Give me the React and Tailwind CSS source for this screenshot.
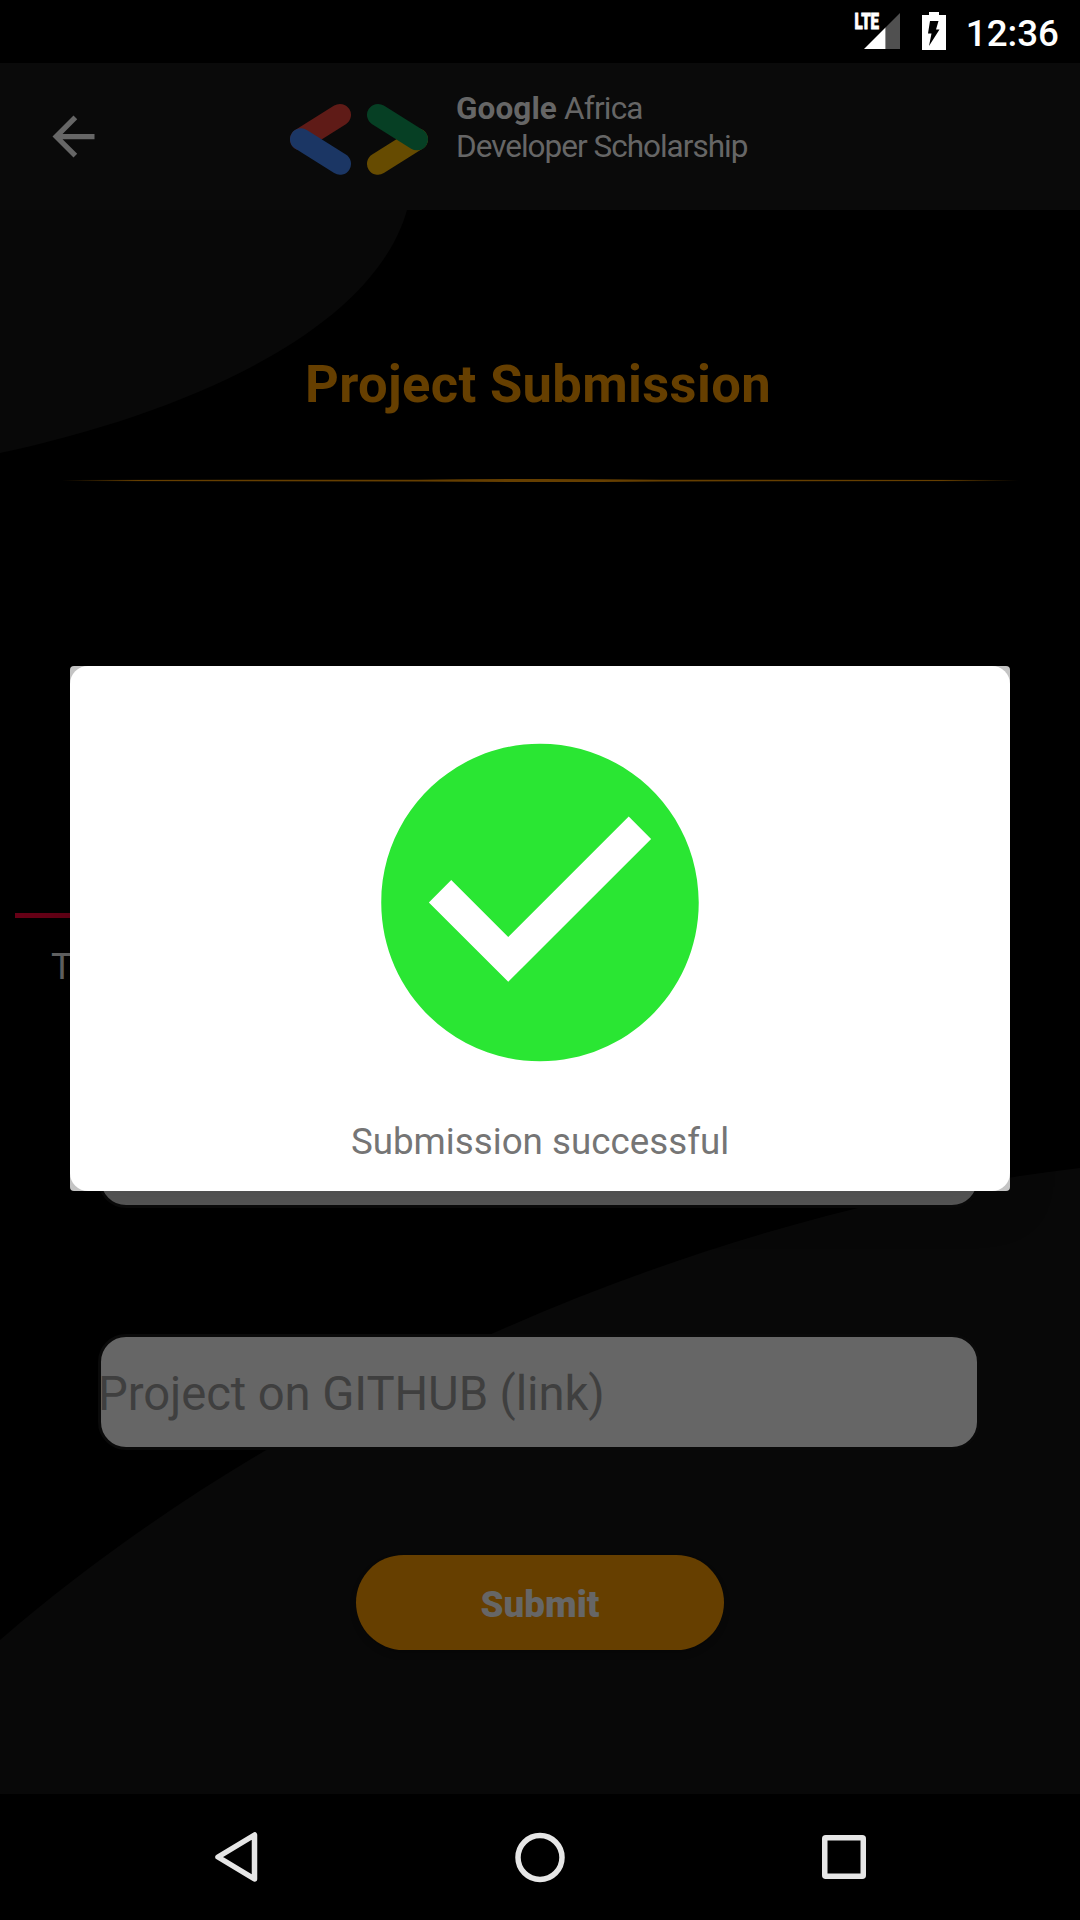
function StatusBar() {
  return (
    <div className="flex h-[63px] items-center justify-end bg-black pr-[21px]">
      <svg width="48" height="63" viewBox="0 0 48 63" className="mr-[21px]">
        <text x="1.5" y="28.8" fontSize="22.5" fontWeight="900" textLength="24.500" lengthAdjust="spacingAndGlyphs" fill="#fff" stroke="#fff" strokeWidth="0.9" fontFamily="Roboto, sans-serif">LTE</text>
        <path d="M47 13V49H32.500V27.500Z" fill="#505050" />
        <path d="M32.500 27.500V49H11Z" fill="#fff" />
      </svg>
      <svg width="24" height="63" viewBox="0 0 24 63" className="mr-[20px]">
        <path d="M7 12H17V15H24V50H0V15H7Z" fill="#fff" />
        <path d="M8 21H16.500L14 29.500H17.500L7 46L9.500 33.500H6Z" fill="#000" />
      </svg>
      <span className="pt-[5px] text-[36.75px] leading-[58px] font-medium text-white">12:36</span>
    </div>
  );
}

function Header() {
  return (
    <header className="flex h-[147px] items-start bg-[#0a0a0a] pl-[42px]">
      <svg width="63" height="63" viewBox="0 0 24 24" className="mt-[42px]" fill="#666">
        <path d="M20 11H7.830l5.590-5.590L12 4l-8 8 8 8 1.410-1.410L7.830 13H20v-2z" />
      </svg>
      <svg width="138" height="72" viewBox="0 0 138 72" className="mt-[40px] ml-[185px]" fill="none" strokeWidth="22" strokeLinecap="round">
        <path d="M50 11.900L11 36.300" stroke="#5f1b17" />
        <path d="M11 36.300L50 60.800" stroke="#1b3664" />
        <path d="M88 60.800L127 36.300" stroke="#664b01" />
        <path d="M88 11.900L127 36.300" stroke="#063f24" />
      </svg>
      <div className="mt-[27px] ml-[28px] text-[31.5px] leading-[38px] whitespace-nowrap text-[#666]">
        <p className="tracking-[-0.8px]"><b className="font-bold tracking-[0.1px]">Google</b> Africa</p>
        <p className="tracking-[-1px]">Developer Scholarship</p>
      </div>
    </header>
  );
}

function Backdrop() {
  return (
    <svg className="absolute inset-0" width="1080" height="1584" viewBox="0 210 1080 1584" fill="#080808">
      <path d="M0 210H407C373 330 190 412 0 453Z" />
      <path d="M0 1640C270 1405 690 1212 1080 1168V1794H0Z" />
    </svg>
  );
}

function SuccessDialog() {
  return (
    <div className="absolute top-[666px] left-[70px] h-[525px] w-[940px] rounded-[4px] bg-[#c4c4c4] shadow-[0_12px_48px_rgba(0,0,0,0.2)]">
      <div className="flex h-full flex-col items-center rounded-[18px] bg-white">
        <svg width="382" height="382" viewBox="-0.031 0 24.063 24.063" className="mt-[46px]" fill="#2ae633">
          <path d="M12 2C6.480 2 2 6.480 2 12s4.480 10 10 10 10-4.480 10-10S17.520 2 12 2zm-2 15l-5-5 1.410-1.410L10 14.170l7.590-7.590L19 8l-9 9z" />
        </svg>
        <p className="mt-[26px] text-[36.75px] leading-[43px] text-[#757575]">Submission successful</p>
      </div>
    </div>
  );
}

function NavBar() {
  return (
    <nav className="flex h-[126px] items-center bg-black">
      <svg width="1080" height="126" viewBox="0 0 1080 126" fill="none" stroke="#e6e6e6" strokeWidth="5.500" strokeLinejoin="round">
        <path d="M254.500 41V85L218 63Z" />
        <circle cx="540" cy="63.500" r="22" />
        <rect x="824.750" y="43.750" width="38.500" height="38.500" rx="1" />
      </svg>
    </nav>
  );
}

export default function App() {
  return (
    <div className="relative flex h-[1920px] w-[1080px] flex-col overflow-hidden bg-black font-['Roboto',sans-serif]">
      <StatusBar />
      <Header />
      <main className="relative h-[1584px] overflow-hidden">
        <Backdrop />
        <div className="relative flex flex-col items-center">
          <h1 className="mt-[143px] mr-[4px] text-[52.5px] leading-[62px] font-bold tracking-[0.35px] text-[#663f00]">Project Submission</h1>
          <svg width="956" height="6" viewBox="0 0 940 6" preserveAspectRatio="none" className="mt-[62px]">
            <defs>
              <linearGradient id="rule">
                <stop offset="0" stopColor="#663f00" stopOpacity="0" />
                <stop offset="0.08" stopColor="#663f00" />
                <stop offset="0.92" stopColor="#663f00" />
                <stop offset="1" stopColor="#663f00" stopOpacity="0" />
              </linearGradient>
            </defs>
            <path d="M0 3L350 2.700Q470 1.300 590 2.700L940 3L940 4L590 4.500Q470 5.500 350 4.500L0 4Z" fill="url(#rule)" />
          </svg>
          <div className="mt-[430px] ml-[15px] h-[5px] w-[510px] self-start bg-[#660016]" />
          <p className="mt-[27px] self-start pl-[51px] text-[36.75px] leading-[43px] text-[#666]">T</p>
          <div className="mt-[104px] mr-[2px] h-[116px] w-[882px] rounded-[28px] border-[3px] border-[#0a0a0a] bg-[#5c5c5c]" />
          <div className="mt-[126px] mr-[2px] flex h-[116px] w-[882px] items-center rounded-[28px] border-[3px] border-[#0a0a0a] bg-[#666]">
            <span className="-ml-[3px] pt-[4px] text-[47.25px] leading-[56px] tracking-[-0.1px] text-[#3f3f3f]">Project on GITHUB (link)</span>
          </div>
          <button className="mt-[105px] h-[95px] w-[368px] rounded-full bg-[#663f00] pt-[5px] text-[36.75px] font-black text-[#666] shadow-[0_4px_6px_rgba(0,0,0,0.2)]">Submit</button>
        </div>
      </main>
      <NavBar />
      <SuccessDialog />
    </div>
  );
}
